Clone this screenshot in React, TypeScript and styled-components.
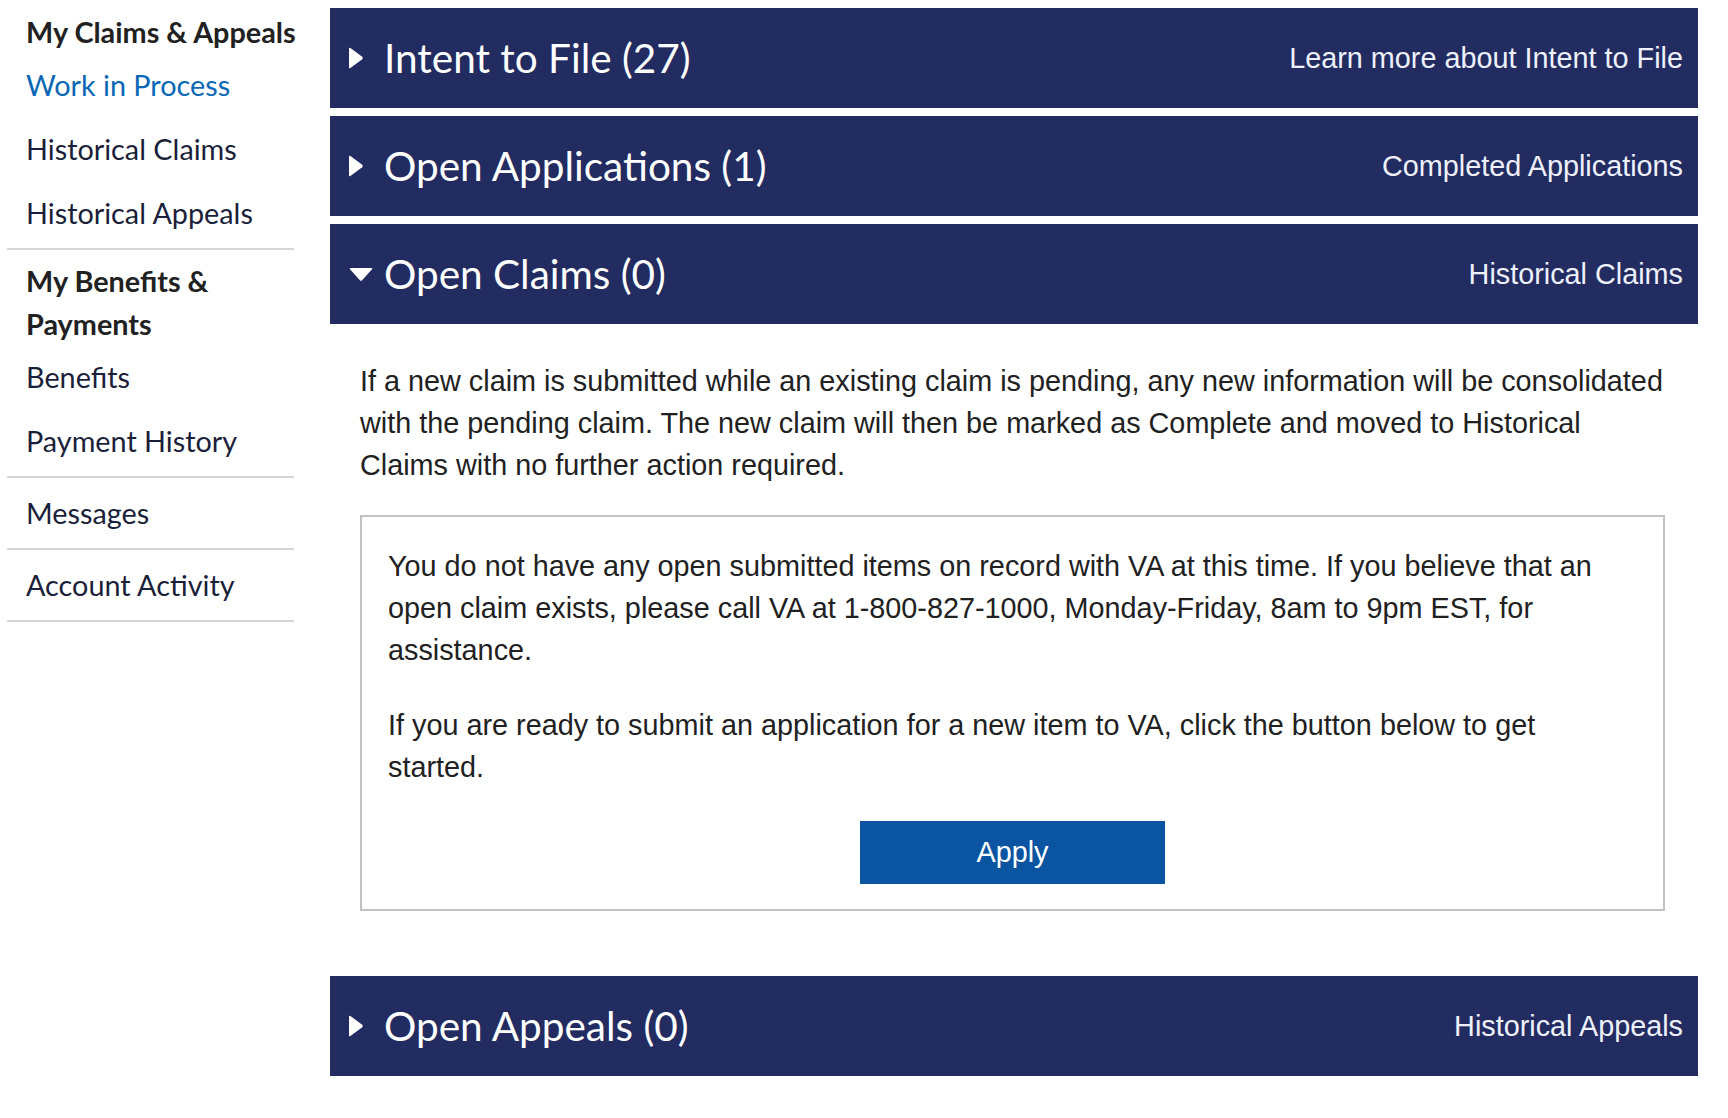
import React from "react"
import styled, { createGlobalStyle } from "styled-components"

const GlobalStyle = createGlobalStyle`
  body {
    margin: 0;
    background: #ffffff;
    font-family: "Liberation Sans", Arial, sans-serif;
  }
`

const Page = styled.div`
  display: flex;
  gap: 36px;
  padding-right: 30px;
`

const Sidebar = styled.nav`
  width: 294px;
  flex-shrink: 0;
  padding-left: 7px;
  box-sizing: border-box;
`

const NavGroup = styled.div`
  border-bottom: 2px solid #d6d7d9;
  padding: 4px 0 2px;
`

// the heading may run a little past the rule on the right, as in the original
const NavHeading = styled.div`
  font-family: Lato, "Noto Sans", sans-serif;
  font-weight: 700;
  font-size: 28.8px;
  line-height: 43px;
  color: #212121;
  padding: 6.5px 0 0 19px;
  margin-right: -24px;
`

const NavLink = styled.a<{ active?: boolean }>`
  display: block;
  font-family: Lato, "Noto Sans", sans-serif;
  font-size: 28.8px;
  line-height: 43px;
  padding: 10px 0 11px 19px;
  color: ${p => (p.active ? "#0b68b5" : "#1b1f3a")};
  text-decoration: none;
  cursor: pointer;
`

const Main = styled.main`
  flex: 1;
  display: flex;
  flex-direction: column;
  gap: 8px;
  padding-top: 8px;
`

const Bar = styled.div`
  height: 100px;
  background: #232c61;
  display: flex;
  align-items: center;
  padding: 0 15px 0 19px;
  cursor: pointer;
`

const CaretBox = styled.span`
  width: 35px;
  flex-shrink: 0;
  display: flex;
  align-items: center;
`

const BarTitle = styled.h2`
  margin: 0;
  font-family: Lato, "Noto Sans", sans-serif;
  font-weight: 400;
  font-size: 40.5px;
  line-height: 1;
  color: #ffffff;
`

const BarLink = styled.a`
  margin-left: auto;
  font-size: 28.8px;
  color: #eef1fb;
  text-decoration: none;
`

const Panel = styled.div`
  padding: 36px 33px 57px 30px;
`

const Text = styled.p`
  margin: 0;
  font-size: 28.8px;
  line-height: 42px;
  color: #212121;
  & + & {
    margin-top: 33px;
  }
`

const NoticeBox = styled.div`
  margin-top: 29px;
  border: 2px solid #c2c2c2;
  padding: 28px 26px 25px 26px;
`

const ApplyButton = styled.button`
  display: block;
  margin: 33px auto 0;
  width: 305px;
  height: 63px;
  border: none;
  background: #0a54a2;
  color: #ffffff;
  font-family: "Liberation Sans", Arial, sans-serif;
  font-size: 28.8px;
  cursor: pointer;
`

function Caret({ open }: { open: boolean }) {
  if (open) {
    return (
      <svg width="24" height="13" viewBox="0 0 24 13">
        <path d="M1.6 0H22.4Q24 0 23 1.3L13.1 12.2Q12 13.2 10.9 12.2L1 1.3Q0 0 1.6 0Z" fill="#fff" />
      </svg>
    )
  }
  return (
    <svg width="14" height="22" viewBox="0 0 14 22">
      <path d="M0 1.7V20.3Q0 22 1.4 21L13.2 12.2Q14.2 11 13.2 9.8L1.4 1Q0 0 0 1.7Z" fill="#fff" />
    </svg>
  )
}

const sections = [
  { title: "Intent to File (27)", link: "Learn more about Intent to File", open: false },
  { title: "Open Applications (1)", link: "Completed Applications", open: false },
  { title: "Open Claims (0)", link: "Historical Claims", open: true },
  { title: "Open Appeals (0)", link: "Historical Appeals", open: false },
]

export default function App() {
  return (
    <>
      <GlobalStyle />
      <Page>
        <Sidebar>
          <NavGroup>
            <NavHeading>My Claims &amp; Appeals</NavHeading>
            <NavLink active>Work in Process</NavLink>
            <NavLink>Historical Claims</NavLink>
            <NavLink>Historical Appeals</NavLink>
          </NavGroup>
          <NavGroup>
            <NavHeading>My Benefits &amp; Payments</NavHeading>
            <NavLink>Benefits</NavLink>
            <NavLink>Payment History</NavLink>
          </NavGroup>
          <NavGroup>
            <NavLink>Messages</NavLink>
          </NavGroup>
          <NavGroup>
            <NavLink>Account Activity</NavLink>
          </NavGroup>
        </Sidebar>

        <Main>
          {sections.map(s => (
            <div key={s.title}>
              <Bar>
                <CaretBox><Caret open={s.open} /></CaretBox>
                <BarTitle>{s.title}</BarTitle>
                <BarLink>{s.link}</BarLink>
              </Bar>
              {s.open && (
                <Panel>
                  <Text>
                    If a new claim is submitted while an existing claim is pending, any new information will be
                    consolidated with the pending claim. The new claim will then be marked as Complete and moved to
                    Historical Claims with no further action required.
                  </Text>
                  <NoticeBox>
                    <Text>
                      You do not have any open submitted items on record with VA at this time. If you believe that an
                      open claim exists, please call VA at 1-800-827-1000, Monday-Friday, 8am to 9pm EST, for
                      assistance.
                    </Text>
                    <Text>
                      If you are ready to submit an application for a new item to VA, click the button below to get
                      started.
                    </Text>
                    <ApplyButton>Apply</ApplyButton>
                  </NoticeBox>
                </Panel>
              )}
            </div>
          ))}
        </Main>
      </Page>
    </>
  )
}
